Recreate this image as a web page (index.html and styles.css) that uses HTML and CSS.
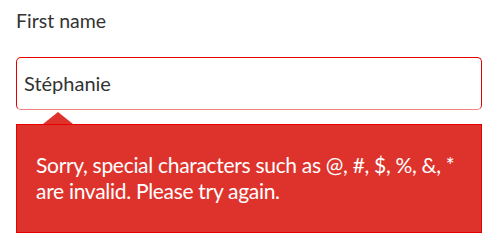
FILE: index.html
```html
<!DOCTYPE html>
<html>
<head>
<meta charset="utf-8">
<link rel="stylesheet" href="styles.css">
</head>
<body>
<div class="field">
  <label class="label">First name</label>
  <div class="input">Stéphanie</div>
  <div class="error">
    <span class="arrow"></span>
    <p class="msg">Sorry, special characters such as @, #, $, %, &amp;, * are invalid. Please try again.</p>
  </div>
</div>
</body>
</html>
```

FILE: styles.css
```css
html, body { margin: 0; padding: 0; background: #fff; }
body { font-family: Lato, "Open Sans", sans-serif; }
.field { padding: 8px 18px 0 16px; display: flex; flex-direction: column; }
.label { font-size: 19.5px; line-height: 26px; color: #333; }
.input {
  margin-top: 23px;
  height: 51px;
  border: 1px solid #e60000;
  border-bottom-color: #f08484;
  border-radius: 5px;
  box-sizing: content-box;
  padding: 0 7px;
  font-size: 20px;
  line-height: 51px;
  color: #333;
}
.error {
  position: relative;
  margin-top: 14px;
  background: #de332c;
  border: 1px solid #e60000;
  padding: 27px 10px 28px 19px;
}
.arrow {
  position: absolute;
  top: -13px;
  left: 26px;
  width: 0; height: 0;
  border-left: 15px solid transparent;
  border-right: 15px solid transparent;
  border-bottom: 12px solid #de332c;
}
.msg { margin: 0; color: #fff; font-size: 21px; line-height: 26px; letter-spacing: -0.3px; }
```
